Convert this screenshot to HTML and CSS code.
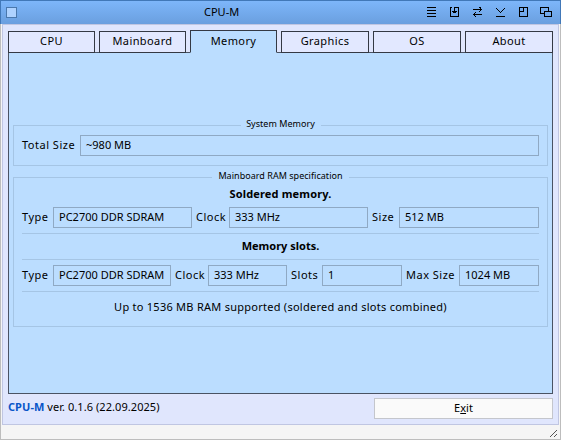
FILE: index.html
```html
<!DOCTYPE html>
<html lang="en">
<head>
<meta charset="utf-8">
<title>CPU-M</title>
<link rel="stylesheet" href="styles.css">
</head>
<body>
<div class="window">
  <header class="titlebar">
    <span class="window-menu"></span>
    <h1 class="title">CPU-M</h1>
    <svg class="controls" width="126" height="12" viewBox="0 0 126 12" shape-rendering="crispEdges">
      <path d="M1 1.5h9M1 4.5h9M1 7.5h9M1 10.5h9"/>
      <path d="M26 1.5h-1.500v9h8v-9h-3.500M28.500 1v6M26 5.500h5M27 6.500h3"/>
      <path d="M47 3.500h9M54 1.500h1M54 2.500h1M54 4.500h1M53 5.500h1M53 1.500h1M47 8.500h9M48 7.500h1M49 6.500h1M48 9.500h1M49 10.500h1"/>
      <path d="M70 2.500h1M71 3.500h1M72 4.500h1M73 5.500h1M74 6.500h1M75 5.500h1M76 4.500h1M77 3.500h1M78 2.500h1M70 10.500h9"/>
      <path d="M93.500 1.500h8v9h-8zM97.500 1v4.500M93 5.500h5"/>
      <path d="M118.500 7.500h-4v-6h8v3M118.500 5.500h7v5h-7z"/>
    </svg>
  </header>
  <main class="body">
    <nav class="tabs">
      <a class="tab">CPU</a>
      <a class="tab">Mainboard</a>
      <a class="tab active">Memory</a>
      <a class="tab wide">Graphics</a>
      <a class="tab wide">OS</a>
      <a class="tab wide">About</a>
    </nav>
    <section class="panel">
      <fieldset class="group system">
        <legend>System Memory</legend>
        <div class="row total">
          <label>Total Size</label><output>~980 MB</output>
        </div>
      </fieldset>
      <fieldset class="group board">
        <legend>Mainboard RAM specification</legend>
        <h2>Soldered memory.</h2>
        <div class="row soldered">
          <label>Type</label><output>PC2700 DDR SDRAM</output>
          <label>Clock</label><output>333 MHz</output>
          <label>Size</label><output>512 MB</output>
        </div>
        <h2 class="ruled">Memory slots.</h2>
        <div class="row slots">
          <label>Type</label><output>PC2700 DDR SDRAM</output>
          <label>Clock</label><output>333 MHz</output>
          <label>Slots</label><output>1</output>
          <label>Max Size</label><output>1024 MB</output>
        </div>
        <p class="note">Up to 1536 MB RAM supported (soldered and slots combined)</p>
      </fieldset>
    </section>
    <div class="actions">
      <p class="version"><b>CPU-M</b> <span>ver. 0.1.6 (22.09.2025)</span></p>
      <button class="exit">E<u>x</u>it</button>
    </div>
  </main>
  <footer class="statusbar">
    <svg width="8" height="8" viewBox="0 0 8 8" shape-rendering="crispEdges"><path d="M0 7.500h1M1 6.500h1M2 5.500h1M3 4.500h1M4 3.500h1M5 2.500h1M6 1.500h1M4 7.500h1M5 6.500h1M6 5.500h1"/></svg>
  </footer>
</div>
</body>
</html>
```
FILE: styles.css
```css
* { box-sizing: border-box; }
body { margin: 0; font: 11px/15px "Noto Sans", "Open Sans", sans-serif; color: #000; }
h1, h2, p { margin: 0; font-size: inherit; }
.window { width: 561px; height: 440px; display: flex; flex-direction: column; background: #f5f5f5; border: 1px solid #bdbdbd; border-width: 0 1px; }
.titlebar { height: 24px; flex: none; margin: 0 -1px; display: grid; grid-template-columns: 203px 1fr 126px; align-items: start; padding-right: 8px; border: 1px solid #4178b8; border-bottom: 0; background: linear-gradient(#7db6fa, #6a9fdf); }
.window-menu { width: 11px; height: 11px; margin: 6px 0 0 5px; background: #aed2ff; border: 1px solid #4a78ad; }
.title { padding-top: 3px; font-weight: 400; }
.controls { margin-top: 5px; fill: none; stroke: #000; stroke-width: 1; }
.body { height: 401px; flex: none; margin: 0 1px; padding: 5px 5px 0; background: #e0e6fd; border: 1px solid #c0c6e2; }
.tabs { position: relative; height: 23px; display: flex; gap: 4px; align-items: flex-end; margin-bottom: -1px; }
.tab { width: 87px; height: 22px; padding-top: 1px; border: 1px solid #343944; background: #e2e8ff; text-align: center; letter-spacing: .4px; }
.wide { width: 88px; }
.active { height: 23px; padding-top: 2px; background: #bbddff; border-bottom-color: #bbddff; }
.panel { height: 342px; padding: 67px 4px 0; border: 1px solid #4a5363; background: #bbddff; }
.group { margin: 0; padding: 0 8px; border: 1px solid #a5c5e5; min-width: 0; }
.group legend { font-size: 9px; line-height: 8px; height: 11px; text-align: center; margin: 0 auto; padding: 0; letter-spacing: .03px; white-space: nowrap; }
.system { height: 46px; }
.system legend { width: 80px; }
.board { height: 155px; margin-top: 6px; }
.board legend { width: 137px; }
.row { display: grid; align-items: start; }
.total { grid-template-columns: 58px 459px; padding-top: 4px; }
.soldered { grid-template-columns: 31px 139px 37px 139px 31px 140px; margin-top: 4px; }
.slots { grid-template-columns: 31px 118px 37px 79px 35px 80px 57px 80px; padding: 5px 0; border-bottom: 1px solid #a5c5e5; }
.row label { line-height: 20px; letter-spacing: .5px; white-space: nowrap; }
.row label:nth-of-type(n+2) { padding-left: 4px; }
.row output { display: block; height: 21px; line-height: 18px; padding-left: 5px; border: 1px solid #8fa9c4; white-space: nowrap; }
h2 { height: 20px; padding-top: 3px; text-align: center; font-weight: 700; letter-spacing: .15px; }
h2.ruled { height: 27px; margin-top: 5px; padding-top: 4px; border: 1px solid #a5c5e5; border-width: 1px 0; letter-spacing: 0; }
.note { padding-top: 7px; text-align: center; letter-spacing: .26px; white-space: nowrap; }
.actions { display: flex; justify-content: space-between; padding-top: 4px; }
.version { padding-top: 1px; letter-spacing: .06px; }
.version b { color: #0855c8; }
.exit { width: 179px; height: 21px; padding: 0 0 2px; border: 1px solid #c4c6cc; background: #fafafa; color: #000; font: inherit; }
.statusbar { display: flex; flex: 1; justify-content: flex-end; padding: 4px 2px 0 0; border-bottom: 1px solid #bdbdbd; }
.statusbar svg { stroke: #555; }
```
